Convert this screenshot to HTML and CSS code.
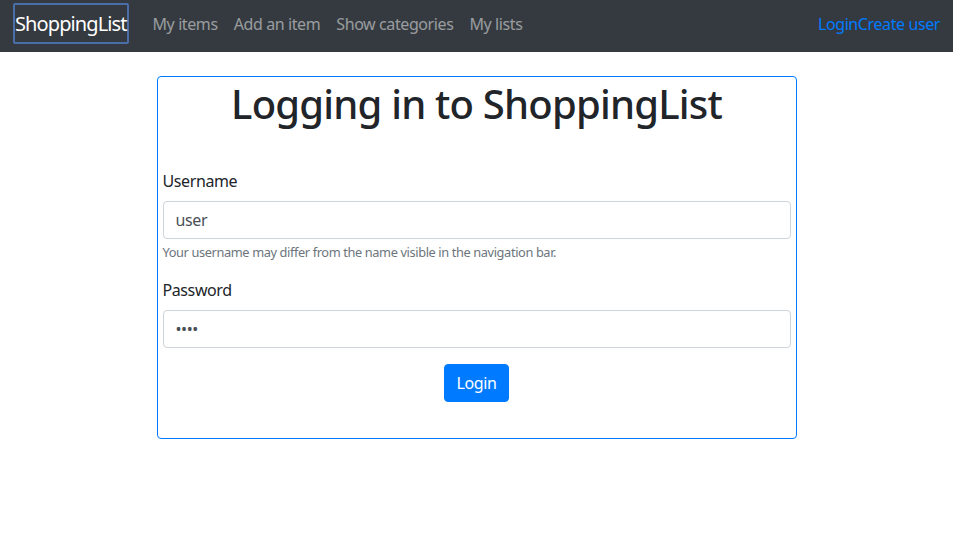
FILE: index.html
```html
<!DOCTYPE html>
<html lang="en">
<head>
<meta charset="utf-8">
<title>ShoppingList - Login</title>
<link rel="stylesheet" href="styles.css">
</head>
<body>
<nav class="navbar">
  <a class="brand" href="#">ShoppingList</a>
  <ul class="nav">
    <li><a class="nav-link" href="#">My items</a></li>
    <li><a class="nav-link" href="#">Add an item</a></li>
    <li><a class="nav-link" href="#">Show categories</a></li>
    <li><a class="nav-link" href="#">My lists</a></li>
  </ul>
  <div class="nav-right">
    <a class="user-link" href="#">Login</a><a class="user-link" href="#">Create user</a>
  </div>
</nav>
<main class="page">
  <div class="card">
    <h1 class="title">Logging in to ShoppingList</h1>
    <form class="form">
      <div class="group">
        <label class="label" for="username">Username</label>
        <input class="input" id="username" type="text" value="user">
        <small class="help">Your username may differ from the name visible in the navigation bar.</small>
      </div>
      <div class="group">
        <label class="label" for="password">Password</label>
        <input class="input" id="password" type="password" value="user">
      </div>
      <div class="actions">
        <button class="btn" type="button">Login</button>
      </div>
    </form>
  </div>
</main>
</body>
</html>
```
FILE: styles.css
```css
* { box-sizing: border-box; }
html, body { margin: 0; padding: 0; }
body {
  font-family: "Noto Sans", "Open Sans", sans-serif;
  font-size: 16px;
  line-height: 1.5;
  letter-spacing: -0.025em;
  color: #212529;
  background: #fff;
}
a { text-decoration: none; }

.navbar {
  height: 52px;
  background: #343a40;
  display: flex;
  align-items: flex-start;
  padding: 3px 13px 0 13px;
}
.brand {
  display: flex;
  align-items: center;
  height: 41px;
  padding: 0;
  border: 2px solid #4a6ea8;
  border-radius: 2px;
  color: #fff;
  font-size: 20px;
  line-height: 30px;
  letter-spacing: -0.045em;
  margin-right: 16px;
  white-space: nowrap;
}
.nav {
  list-style: none;
  margin: 0;
  padding: 0;
  display: flex;
  height: 41px;
  align-items: center;
}
.nav-link {
  display: block;
  padding: 0 8px;
  color: rgba(255, 255, 255, 0.5);
  white-space: nowrap;
}
.nav-right {
  margin-left: auto;
  height: 41px;
  display: flex;
  align-items: center;
}
.user-link { color: #007bff; white-space: nowrap; }

.page {
  display: flex;
  justify-content: center;
  padding-top: 24px;
}
.card {
  width: 640px;
  border: 1px solid #007bff;
  border-radius: 4px;
  padding: 3px 5px 36px;
}
.title {
  margin: 0 0 41px;
  text-align: center;
  font-size: 40px;
  font-weight: 500;
  line-height: 1.2;
  letter-spacing: -0.02em;
}
.group {
  display: flex;
  flex-direction: column;
  margin-bottom: 16px;
}
.label { margin-bottom: 8px; }
.input {
  height: 38px;
  padding: 6px 12px;
  font: inherit;
  letter-spacing: inherit;
  color: #495057;
  border: 1px solid #ced4da;
  border-radius: 4px;
  background: #fff;
}
.help {
  margin-top: 4px;
  font-size: 12.8px;
  line-height: 1.5;
  letter-spacing: -0.03em;
  color: #6c757d;
}
.actions {
  display: flex;
  justify-content: center;
}
.btn {
  height: 38px;
  padding: 6px 12px;
  font: inherit;
  letter-spacing: inherit;
  color: #fff;
  background: #007bff;
  border: 1px solid #007bff;
  border-radius: 4px;
}
```
